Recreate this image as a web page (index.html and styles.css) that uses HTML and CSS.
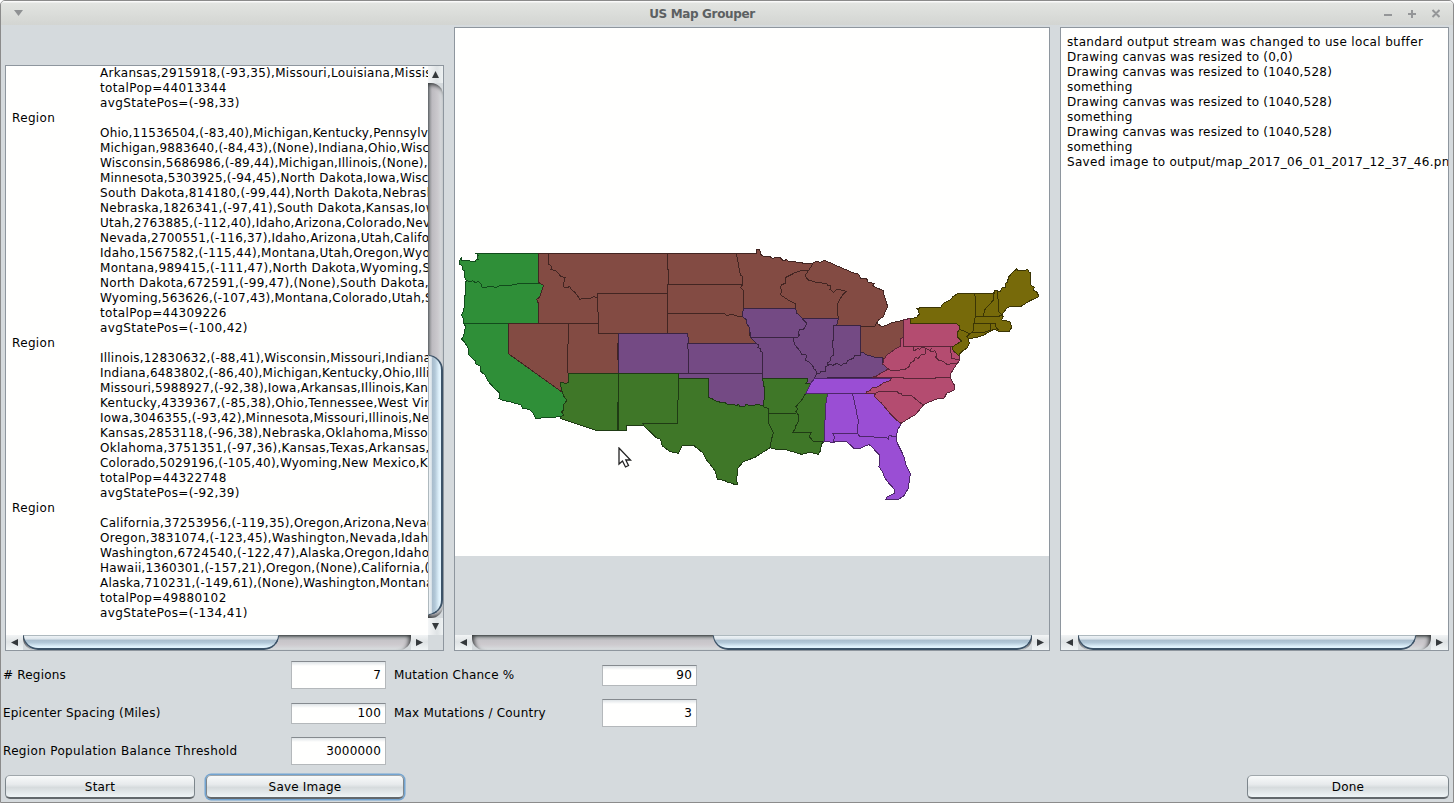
FILE: index.html
```html
<!DOCTYPE html>
<html lang="en">
<head>
<meta charset="utf-8">
<title>US Map Grouper</title>
<link rel="stylesheet" href="styles.css">
</head>
<body>
<div class="window">
  <header class="titlebar">
    <svg class="menu-icon" width="10" height="7" viewBox="0 0 10 7"><path d="M0 0H9L4.500 6Z" fill="#8f9193"/></svg>
    <h1>US Map Grouper</h1>
    <svg class="controls" width="56" height="12" viewBox="0 0 56 12" fill="none" stroke="#949698" stroke-width="2"><path d="M0 7H8M24 6H32M28 2V10M48.500 2L55.500 9M55.500 2L48.500 9"/></svg>
  </header>
  <main class="panels">
    <section class="panel regions">
      <div class="view">
<pre class="report"><span>Arkansas,2915918,(-93,35),Missouri,Louisiana,Mississippi</span>
<span class="wide">totalPop=44013344</span>
<span class="wide">avgStatePos=(-98,33)</span>
<b>Region</b>
<span class="tight">Ohio,11536504,(-83,40),Michigan,Kentucky,Pennsylvania</span>
<span class="tight">Michigan,9883640,(-84,43),(None),Indiana,Ohio,Wisconsin</span>
<span class="tight">Wisconsin,5686986,(-89,44),Michigan,Illinois,(None),Iowa</span>
<span class="tight">Minnesota,5303925,(-94,45),North Dakota,Iowa,Wisconsin</span>
<span>South Dakota,814180,(-99,44),North Dakota,Nebraska</span>
<span>Nebraska,1826341,(-97,41),South Dakota,Kansas,Iowa</span>
<span>Utah,2763885,(-112,40),Idaho,Arizona,Colorado,Nevada</span>
<span class="tight">Nevada,2700551,(-116,37),Idaho,Arizona,Utah,California</span>
<span>Idaho,1567582,(-115,44),Montana,Utah,Oregon,Wyoming</span>
<span>Montana,989415,(-111,47),North Dakota,Wyoming,South</span>
<span>North Dakota,672591,(-99,47),(None),South Dakota,</span>
<span class="tight">Wyoming,563626,(-107,43),Montana,Colorado,Utah,South</span>
<span class="wide">totalPop=44309226</span>
<span class="wide">avgStatePos=(-100,42)</span>
<b>Region</b>
<span class="tight">Illinois,12830632,(-88,41),Wisconsin,Missouri,Indiana</span>
<span class="tight">Indiana,6483802,(-86,40),Michigan,Kentucky,Ohio,Illinois</span>
<span class="tight">Missouri,5988927,(-92,38),Iowa,Arkansas,Illinois,Kansas</span>
<span>Kentucky,4339367,(-85,38),Ohio,Tennessee,West Virginia</span>
<span class="tight">Iowa,3046355,(-93,42),Minnesota,Missouri,Illinois,Nebraska</span>
<span>Kansas,2853118,(-96,38),Nebraska,Oklahoma,Missouri</span>
<span>Oklahoma,3751351,(-97,36),Kansas,Texas,Arkansas,</span>
<span class="tight">Colorado,5029196,(-105,40),Wyoming,New Mexico,Kansas</span>
<span class="wide">totalPop=44322748</span>
<span class="wide">avgStatePos=(-92,39)</span>
<b>Region</b>
<span>California,37253956,(-119,35),Oregon,Arizona,Nevada</span>
<span>Oregon,3831074,(-123,45),Washington,Nevada,Idaho</span>
<span>Washington,6724540,(-122,47),Alaska,Oregon,Idaho</span>
<span class="tight">Hawaii,1360301,(-157,21),Oregon,(None),California,(None)</span>
<span class="tight">Alaska,710231,(-149,61),(None),Washington,Montana</span>
<span class="wide">totalPop=49880102</span>
<span class="wide">avgStatePos=(-134,41)</span></pre>
      </div>
      <div class="vbar"><i class="btn up"></i><div class="track"><div class="thumb"></div></div><i class="btn down"></i></div>
      <div class="hbar"><i class="btn left"></i><div class="track"><div class="thumb thumb-regions"></div></div><i class="btn right"></i></div>
      <div class="corner"></div>
    </section>
    <section class="panel map">
      <div class="view">
<svg class="states" width="594" height="528" viewBox="0 -636 1782 1584">
<g fill="#2f8f38" stroke="#124b1c">
<path d="M251 40H62L70 45L66 52L69 58L62 60V64L52 65L35 60L18 60V56L13 62V72L18 74L22 80V88L28 92V98L30 115L34 122L31 130V165L28 168V200L24 215L20 225L26 240V250L32 260L28 275L26 287L20 297L28 305L36 318L40 325L42 345L60 362V370L75 378L78 395L90 405L98 422L118 445L135 460L132 475L142 481L165 485L198 495L202 504L222 508L235 520L242 535L318 530L326 526L320 516L325 510V495L336 481L326 468L322 457L160 341V250H250V190L245 178L254 172L258 158L266 136L252 128Z"/>
<path d="M34 122L48 125L53 122L60 127L70 125L78 132V140L92 144L100 139L125 142L132 138L160 137L190 131L252 130M26 250H160"/>
</g>
<g fill="#834b43" stroke="#422522">
<path d="M251 40H904V28L914 30L918 44L926 49L945 50L953 56L960 52L975 53L985 62L995 59L1000 65L1020 64L1028 68L1070 71L1085 64L1095 67L1108 61L1125 68L1140 75L1175 90L1192 98L1210 102L1217 115L1235 116L1240 127L1258 130L1253 138L1285 152L1288 170L1292 180L1298 200L1290 217L1285 230L1270 240L1267 250L1280 260L1295 256L1310 248L1335 243L1345 240V292L1338 295L1335 320L1320 327L1310 335L1295 345L1287 358L1281 352L1265 354L1255 350L1235 345L1225 338L1217 337L1216 256H1145L1150 236H1042L1033 225L1025 220L1022 206H866L868 215L863 215L862 230L875 240V250L883 262L884 285L903 310H701L698 280H490L488 340L491 400H341L340 428L330 430L317 427L318 440L322 457L160 341V250H250V190L245 178L254 172L258 158L266 136L252 128Z"/>
<path d="M280 40L281 72L290 80L288 88L305 94L318 110L331 112L328 122L324 135L328 144L345 140L350 150L360 157L375 178L390 174L405 176L415 170L428 173M638 160H428L427 215L431 217V280H490M250 250H430M340 250V305L337 325L338 400M638 40V88L640 90V133M638 133V280M638 133H863M845 42L847 58L851 75L853 92L857 105L863 110V125L861 137L857 143L866 152V206M638 220H807L815 227L830 223L850 229L862 230M1058 92L1040 91L1020 98L993 112L991 130L980 134L975 143L980 150L977 165L1000 180L1020 190L1022 206M1073 72L1065 85L1058 95L1050 108L1060 120L1080 126L1115 131L1120 138L1127 137L1125 148L1135 157L1145 149H1155L1173 154L1163 164L1155 178L1148 190V220L1150 237M1216 258L1260 258L1267 243"/>
</g>
<g fill="#744a84" stroke="#3a2442">
<path d="M490 280H698L701 310H903L887 292L883 262L875 250V240L862 230L863 215L866 206H1022L1025 220L1033 225L1042 236H1150L1145 256H1216V337L1225 338L1235 345L1255 350L1265 354L1281 352L1283 372L1300 387L1280 398L1265 408L1250 413H1117V416H1078L1067 430H1052L1058 424L1057 416H923L926 440H928V470L925 498L910 493L890 497L870 493V498L855 499L850 493L845 498L835 493L820 494L810 488L785 485L775 478L761 472V415H670V400H490Z"/>
<path d="M698 310L701 355V400M670 400H923M903 310L912 315L908 322L915 325V332L923 337V415M887 292H1018M1042 236L1055 250L1051 260L1045 268L1033 270L1030 280L1033 285L1028 292H1016V304L1020 315L1035 333L1041 345L1052 343L1055 350L1050 362L1060 364L1075 380V386L1082 390L1085 400L1078 416M1136 256H1145M1136 256V300L1133 303L1135 345L1127 352L1128 360L1117 370L1121 376L1110 380V395L1097 394L1095 399H1085M1120 374L1125 372L1134 376L1145 370L1160 377L1165 370L1175 371L1177 362L1195 355L1200 346L1217 345V337"/>
</g>
<g fill="#3f7728" stroke="#1f3b14">
<path d="M341 400H670V415H761V472L775 478L785 485L810 488L820 494L835 493L845 498L850 493L855 499L870 498V493L890 497L910 493L925 498L928 470V440H926L923 415H1057L1058 424L1052 430H1067L1052 460H1118L1113 490L1110 540L1107 605L1100 612L1095 635L1090 643L1065 637L1040 643L1020 637L995 630L965 628L945 623L900 652L865 665L848 685L845 720L847 733L838 735L835 730L820 728L810 722L787 717L780 692L755 660L743 638L717 617L705 618L682 616L678 625L670 640L645 635L622 618L617 598L602 592L585 575L565 556H515V571H424L317 536L318 530L326 526L320 516L325 510V495L336 481L326 468L322 457L318 440L317 427L330 430L340 428Z"/>
<path d="M491 400V571M488 486V571M670 415V480L667 482V550H562L567 556M925 498L927 502L940 505L941 550L947 562L955 578L949 600L945 622M941 520H1024M1052 460L1040 480L1023 500L1028 508L1023 515L1030 525L1032 542L1022 558L1020 568L1012 578H1069L1063 590L1075 604L1107 605"/>
</g>
<g fill="#9a4ed4" stroke="#4d276a">
<path d="M1078 416L1117 416V414H1310L1305 422L1285 429L1270 440L1250 444L1245 452L1235 455L1232 460H1263L1257 468L1280 490L1305 520L1325 540L1338 552L1328 570L1323 590L1325 605L1347 650L1353 675L1366 702L1360 745L1347 767L1330 778H1293L1297 770L1318 760L1320 752L1313 742L1300 728L1290 715L1282 695L1272 680L1273 645L1262 634L1252 621L1242 614L1235 616L1215 625H1197L1175 605H1142L1135 607L1107 604L1110 540L1113 490L1118 460H1053L1067 430Z"/>
<path d="M1118 460H1240M1193 462L1200 495L1204 510L1207 530L1210 540L1207 580L1215 590L1295 592L1300 598L1302 588L1309 587L1311 591L1323 590M1207 580H1133L1138 590L1136 605"/>
</g>
<g fill="#b44c70" stroke="#5a2638">
<path d="M1345 240L1366 235V250H1503L1513 258V268L1507 278V290L1520 303L1493 320L1495 335L1513 345V362L1500 380L1488 400L1486 413L1492 425L1498 435V450L1475 460L1467 475L1445 477L1420 487L1405 495L1395 508L1380 525L1360 536L1338 550L1325 540L1305 520L1280 490L1257 468L1263 460H1232L1235 455L1245 452L1250 444L1270 440L1285 429L1305 422L1310 414L1250 412L1265 408L1280 398L1300 387L1283 372L1287 358L1295 345L1310 335L1320 327L1335 320L1338 295L1345 292Z"/>
<path d="M1345 292V319H1493M1310 412H1345V415H1440L1445 412L1486 414M1300 387L1310 393L1350 388L1362 380L1367 368L1377 362L1380 353L1390 355L1400 342H1410L1413 325L1425 332L1430 323M1375 320L1377 333L1388 325L1395 328L1400 322L1413 325L1430 335L1440 332L1445 345L1442 352L1450 360L1462 363L1475 372H1485L1490 370L1508 370M1486 320L1490 355L1512 359M1257 468L1265 457L1280 453L1325 453L1330 459L1340 460V465L1370 467L1385 480L1405 495"/>
</g>
<g fill="#776a0a" stroke="#3b3505">
<path d="M1367 236L1385 232L1393 222L1390 210L1385 205H1394V202H1457L1463 192L1475 185L1488 178L1493 170L1510 160H1615L1620 150L1635 155L1642 142H1650V130L1658 126L1660 112L1672 98L1685 87L1690 93L1698 90L1713 90L1718 88L1722 96H1727V135L1738 142L1735 150L1745 155L1752 170L1725 182L1700 198H1672L1657 203L1645 218L1640 225L1645 230L1640 240L1665 245L1670 262L1663 273H1630L1618 267L1607 273L1585 286L1562 293L1540 296L1543 310L1535 325L1520 335L1510 347L1493 328V320L1520 303L1507 290V278L1513 268V258L1503 250H1366Z"/>
<path d="M1558 160L1562 175L1560 190L1562 205L1560 235L1557 250L1553 280M1513 268L1530 274L1543 282L1535 290L1540 296M1540 280L1556 278L1590 276L1606 270M1562 230H1630L1643 222M1557 250H1620L1622 260L1630 270M1606 250V272M1618 152L1615 180L1605 192L1592 205L1588 213L1585 228M1628 152V175L1631 180V215L1640 225"/>
</g>
</svg>
<svg class="pointer" width="16" height="22" viewBox="0 0 16 22"><path d="M1 1V17L4.500 14L7.500 20L10.500 18.500L7.800 13H12.500Z" fill="#fff" stroke="#222" stroke-width="1.300"/></svg>
      </div>
      <div class="hbar"><i class="btn left"></i><div class="track"><div class="thumb thumb-map"></div></div><i class="btn right"></i></div>
    </section>
    <section class="panel log">
      <div class="view">
<pre class="output"><span class="wide">standard output stream was changed to use local buffer</span>
Drawing canvas was resized to (0,0)
Drawing canvas was resized to (1040,528)
something
Drawing canvas was resized to (1040,528)
something
Drawing canvas was resized to (1040,528)
something
<span class="saved">Saved image to output/map_2017_06_01_2017_12_37_46.png</span></pre>
      </div>
      <div class="hbar"><i class="btn left"></i><div class="track"><div class="thumb thumb-log"></div></div><i class="btn right"></i></div>
    </section>
  </main>
  <form class="settings">
    <label for="count"># Regions</label><input id="count" value="7">
    <label for="chance">Mutation Chance %</label><input id="chance" class="short" value="90">
    <label for="spacing">Epicenter Spacing (Miles)</label><input id="spacing" class="short" value="100">
    <label for="max">Max Mutations / Country</label><input id="max" value="3">
    <label for="threshold" class="wide">Region Population Balance Threshold</label><input id="threshold" value="3000000">
  </form>
  <footer class="actions">
    <button class="start">Start</button>
    <button class="save">Save Image</button>
    <button class="done">Done</button>
  </footer>
</div>
</body>
</html>
```
FILE: styles.css
```css
* { box-sizing: border-box; }
body { margin: 0; font: 12px/15px "DejaVu Sans", sans-serif; color: #000; background: #fff; overflow: hidden; }
.window { width: 1454px; height: 803px; display: flex; flex-direction: column; background: #d5dadd; border: 1px solid #8b8b8b; border-bottom-width: 1px; border-radius: 5px 5px 0 0; overflow: hidden; }
.titlebar { height: 24px; flex: none; display: grid; grid-template-columns: 30px 1fr 80px; align-items: center; padding: 2px 13px 0 13px; background: linear-gradient(#fafafa 0 1px, #e2e4e1 2px, #d3d5d2); }
.titlebar h1 { margin: 0; font-size: 12px; font-weight: bold; letter-spacing: -0.35px; text-align: center; color: #5c6062; }
.menu-icon { margin-top: -2px; }
.controls { justify-self: end; }
.panels { height: 626px; flex: none; display: grid; grid-template-columns: 439px 596px 389px; gap: 10px; padding: 2px 4px 0; }
.panel { min-width: 0; min-height: 0; display: grid; grid-template: minmax(0, 1fr) 15px / minmax(0, 1fr); border: 1px solid #8e969e; }
.regions { margin-top: 38px; grid-template: minmax(0, 1fr) 15px / minmax(0, 1fr) 15px; }
.regions .view, .log .view { background: #fffffe; overflow: hidden; }
.map .view { position: relative; overflow: hidden; }
.states { display: block; background: #fffffe; shape-rendering: crispEdges; }
.states path { vector-effect: non-scaling-stroke; stroke-width: 1; }
.states path + path { fill: none; }
.pointer { position: absolute; left: 163px; top: 419px; }
pre { margin: 0; font: inherit; letter-spacing: 0.2px; }
.report { padding: 0 0 0 6px; letter-spacing: 0.29px; }
.report span { padding-left: 88px; }
.report b { font-weight: normal; letter-spacing: 0.35px; }
.report .tight { letter-spacing: 0.21px; }
.report .wide { letter-spacing: 0.37px; }
.output { padding: 7px 0 0 6px; letter-spacing: 0.22px; }
.wide { letter-spacing: 0.34px; }
.saved { letter-spacing: 0.3px; }
.hbar { display: flex; height: 15px; min-width: 0; }
.vbar { display: flex; flex-direction: column; width: 15px; min-height: 0; }
.btn { flex: none; width: 17px; height: 15px; display: grid; place-items: center; background: linear-gradient(#f2f4f5, #dfe3e5 45%, #f0f4f5); }
.vbar .btn { width: 15px; height: 17px; background: linear-gradient(90deg, #f4f6f7, #dfe3e5 60%, #eef2f3); }
.btn::before { content: ""; width: 7px; height: 7px; background: #34383b; clip-path: polygon(0 50%, 100% 0, 100% 100%); }
.right::before { clip-path: polygon(0 0, 100% 50%, 0 100%); }
.up::before { clip-path: polygon(50% 0, 100% 100%, 0 100%); }
.down::before { clip-path: polygon(0 0, 100% 0, 50% 100%); }
.track { flex: 1; min-width: 0; min-height: 0; }
.hbar .track { background: linear-gradient(#82898b, #b9bdbe 12%, #c6c4c8 35%, #cecbcf 65%, #dadfe1); border-radius: 0 0 12px 12px; box-shadow: inset -4px 2px 4px -2px #373a3c, inset 4px 2px 4px -2px #373a3c; }
.vbar .track { background: linear-gradient(90deg, #8f9599, #bcbabf 25%, #cbc9cd 65%, #dadfe1); border-radius: 0 12px 12px 0; box-shadow: inset 1px 4px 4px -2px #373a3c, inset 1px -4px 4px -2px #373a3c; }
.hbar .thumb { height: 15px; border: 1px solid #3c5368; border-top-color: #aeb9be; border-bottom-width: 2px; border-radius: 0 0 16px 16px; background: linear-gradient(#edf2f5, #dce5eb 25%, #a9bdcd 35%, #b2c8d8 55%, #e1f3fd 90%); }
.thumb-regions { width: 256px; }
.thumb-map { width: 319px; margin-left: 241px; }
.thumb-log { width: 338px; }
.vbar .thumb { width: 15px; height: 260px; margin-top: 272px; border: 1px solid #3c5368; border-left-color: #aeb9be; border-right-width: 2px; border-radius: 0 16px 16px 0; background: linear-gradient(90deg, #edf2f5, #dce5eb 20%, #a9bdcd 28%, #b2c8d8 50%, #e1f3fd 85%); }
.settings { height: 122px; flex: none; display: grid; grid-template-columns: 288px 95px 216px 95px; grid-template-rows: repeat(3, 38px); align-items: center; padding: 5px 0 0 2px; letter-spacing: 0.2px; }
.settings label:nth-of-type(even) { padding-left: 8px; }
.settings input { width: 95px; height: 28px; padding: 0 4px; border: 1px solid #b4b8bb; border-top-color: #858a8f; border-radius: 0; background: linear-gradient(#dfe4e7, #fffffe 4px); font: inherit; letter-spacing: inherit; text-align: right; color: #000; }
.settings .short { height: 21px; }
.actions { display: flex; align-items: flex-start; padding: 2px 4px 0; }
button { height: 24px; padding: 1px 0 0; border: 1px solid #7d868c; border-top-color: #a0a7ab; border-bottom: 2px solid #62686c; border-radius: 5px; background: linear-gradient(#f8fafa, #e7eaec 40%, #d6dbdd 55%, #eff5f7); font: inherit; letter-spacing: 0.2px; color: #000; }
.start { width: 190px; }
.save { width: 198px; margin-left: 11px; box-shadow: 0 0 0 1.500px #73a4d1; }
.done { width: 202px; margin-left: auto; }
```
